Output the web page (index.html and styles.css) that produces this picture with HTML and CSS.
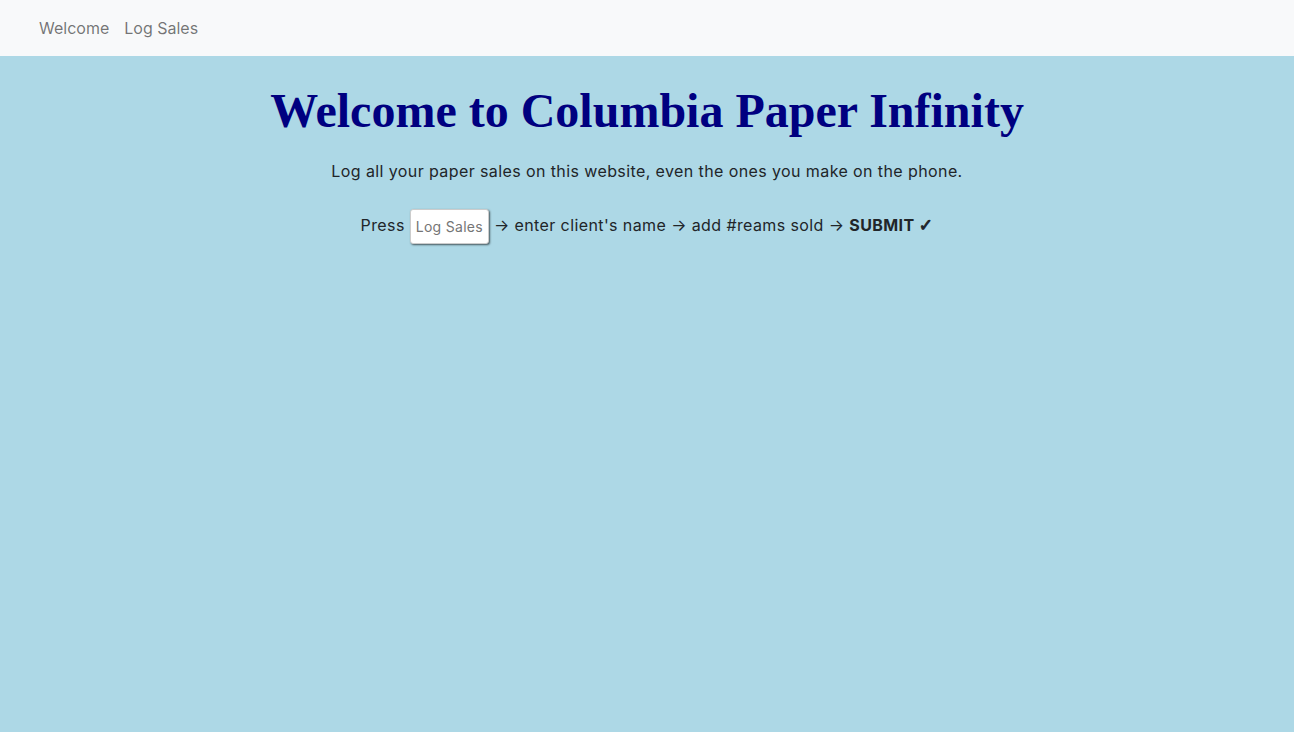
FILE: index.html
```html
<!DOCTYPE html>
<html>
<head>
<meta charset="utf-8">
<link rel="stylesheet" href="styles.css">
</head>
<body>
<nav class="navbar">
  <a class="nav-link" href="#">Welcome</a>
  <a class="nav-link" href="#">Log Sales</a>
</nav>
<main class="main">
  <h1 class="title">Welcome to Columbia Paper Infinity</h1>
  <p class="lead">Log all your paper sales on this website, even the ones you make on the phone.</p>
  <p class="steps">Press <button class="btn">Log Sales</button> → enter client's name → add #reams sold → <b>SUBMIT <span class="check">✓</span></b></p>
</main>
</body>
</html>
```
FILE: styles.css
```css
html, body { margin: 0; height: 100%; }
body {
  font-family: Inter, "Liberation Sans", Arial, sans-serif;
  font-size: 16px;
  color: #212529;
  background: #add8e6;
}
.navbar {
  height: 56px;
  background: #f8f9fa;
  display: flex;
  align-items: center;
  padding-left: 39px;
  gap: 15px;
  box-sizing: border-box;
}
.nav-link {
  color: rgba(0,0,0,0.55);
  text-decoration: none;
  font-size: 16px;
}
.main { text-align: center; padding-top: 26px; }
.title {
  font-family: "Liberation Serif", Georgia, serif;
  font-weight: bold;
  color: #000080;
  font-size: 48px;
  line-height: 1.2;
  margin: 0 0 19px;
}
.lead { margin: 0 0 26px; line-height: 1.5; letter-spacing: 0.4px; }
.steps { margin: 0; line-height: 1.5; letter-spacing: 0.4px; }
.check {
  font-family: "DejaVu Sans", sans-serif;
  font-weight: bold;
  font-size: 17px;
  -webkit-text-stroke: 0.9px #212529;
}
.btn {
  font-family: Inter, "Liberation Sans", Arial, sans-serif;
  font-size: 14px;
  letter-spacing: 0.3px;
  color: #757575;
  background: #fff;
  border: 1px solid #ccc;
  border-radius: 3px;
  box-shadow: 1px 1px 2px rgba(0,0,0,0.6);
  padding: 8px 5px;
  vertical-align: middle;
}
```
